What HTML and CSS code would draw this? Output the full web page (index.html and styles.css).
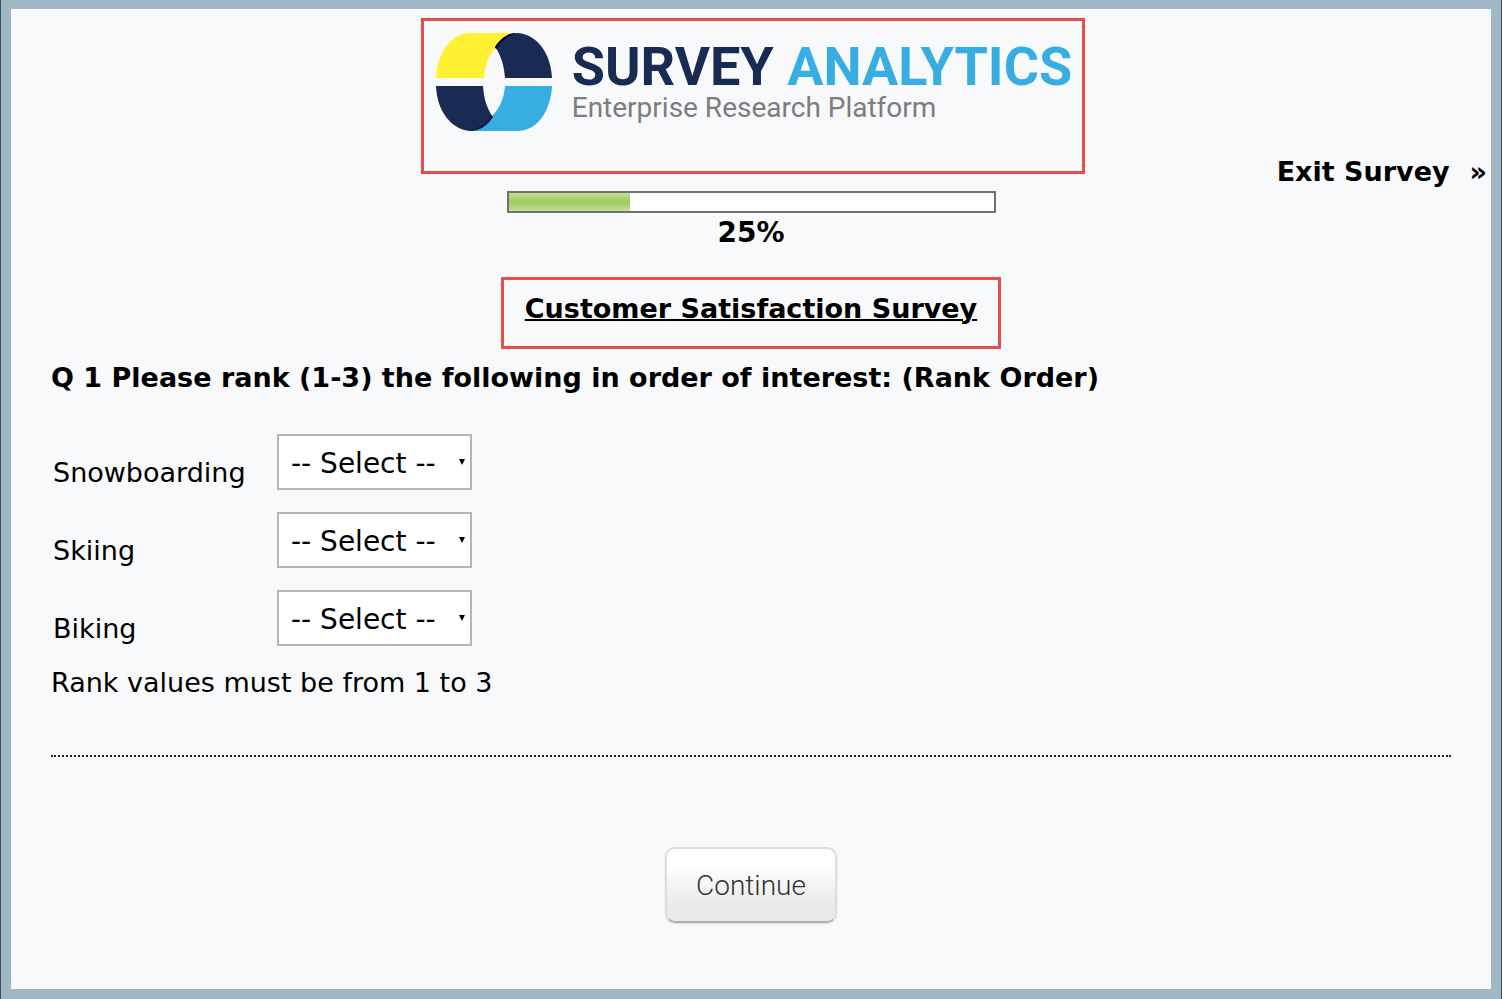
FILE: index.html
```html
<!DOCTYPE html>
<html lang="en">
<head>
<meta charset="utf-8">
<title>Customer Satisfaction Survey</title>
<link rel="stylesheet" href="styles.css">
</head>
<body>
<div class="page">
  <header class="header">
    <div class="logo-box">
      <svg class="logo-mark" viewBox="0 0 118 100" aria-hidden="true">
        <path fill="#fff033" d="M1 46 C2 22 15 2 34 1 L84 1 C75 2 67 7 61 16 C53 23 50 34 49 46 Z"/>
        <path fill="#192b52" d="M60 15 C66 6 73 1 83 1 C103 3 116 22 117 46 L70 46 C69 33 66 23 60 15 Z"/>
        <path fill="#00004e" d="M60 15 C66 6 73 1 81 1 C73 4 67 8 61 17 Z"/>
        <path fill="#38ade1" d="M117 54 C116 78 103 98 84 99 L36 99 C44 98 51 93 57 84 C65 76 69 66 70 54 Z"/>
        <path fill="#192b52" d="M1 54 L48 54 C49 67 52 77 58 85 C51 94 44 99 35 99 C15 97 2 78 1 54 Z"/>
        <path fill="#0c1748" d="M58 85 C52 94 44 99 35 99 C45 96 51 91 57 84 Z"/>
      </svg>
      <div class="logo-text">
        <span class="logo-name">SURVEY <span class="logo-accent">ANALYTICS</span></span>
        <span class="logo-tagline">Enterprise Research Platform</span>
      </div>
    </div>
    <a class="exit" href="#"><span>Exit Survey</span><span>»</span></a>
  </header>
  <main class="survey">
    <div class="progress" role="progressbar" aria-label="Survey progress" aria-valuenow="25" aria-valuemin="0" aria-valuemax="100">
      <div class="progress-fill" style="width: 25%"></div>
    </div>
    <div class="percent">25%</div>
    <h1 class="title">Customer Satisfaction Survey</h1>
    <form class="question">
      <h2 class="prompt">Q 1 Please rank (1-3) the following in order of interest: (Rank Order)</h2>
      <div class="ranks">
        <label class="rank-label" for="snowboarding">Snowboarding</label>
        <div class="rank-field"><select class="rank-select" id="snowboarding"><option>-- Select --</option><option>1</option><option>2</option><option>3</option></select><span class="arrow"></span></div>
        <label class="rank-label" for="skiing">Skiing</label>
        <div class="rank-field"><select class="rank-select" id="skiing"><option>-- Select --</option><option>1</option><option>2</option><option>3</option></select><span class="arrow"></span></div>
        <label class="rank-label" for="biking">Biking</label>
        <div class="rank-field"><select class="rank-select" id="biking"><option>-- Select --</option><option>1</option><option>2</option><option>3</option></select><span class="arrow"></span></div>
      </div>
      <p class="hint">Rank values must be from 1 to 3</p>
      <hr class="divider">
      <button class="continue" type="button">Continue</button>
    </form>
  </main>
</div>
</body>
</html>
```
FILE: styles.css
```css
* {
  box-sizing: border-box;
}

body {
  margin: 0;
  padding: 0 1px;
  background: #3d4c57;
  color: #000;
  font-family: Verdana, "DejaVu Sans", sans-serif;
  font-size: 27px;
  line-height: 34px;
}

.page {
  min-height: 100vh;
  background: #f7f9fb;
  border: 10px solid #a0b8c4;
  border-top-width: 9px;
  display: flex;
  flex-direction: column;
}

.header {
  display: grid;
  grid-template-columns: 1fr auto 1fr;
  padding: 9px 0 0 4px;
}

.logo-box {
  grid-column: 2;
  display: flex;
  align-items: flex-start;
  gap: 19px;
  height: 156px;
  padding: 11px 10px 0 11px;
  border: 3px solid #e94b48;
}

.logo-mark {
  width: 118px;
  height: 100px;
}

.logo-text {
  display: flex;
  flex-direction: column;
  padding-top: 10px;
  font-family: Roboto, sans-serif;
}

.logo-name {
  color: #192b52;
  font-size: 54px;
  font-weight: 700;
  line-height: 50px;
}

.logo-accent {
  color: #38ade1;
}

.logo-tagline {
  color: #7d7d7f;
  font-size: 28px;
  line-height: 32px;
}

.exit {
  align-self: end;
  justify-self: end;
  display: flex;
  gap: 20px;
  margin-bottom: -15px;
  padding-right: 4px;
  color: #000;
  font-weight: 700;
  text-decoration: none;
}

.survey {
  flex: 1;
  display: flex;
  flex-direction: column;
  align-items: center;
  padding: 17px 40px 40px;
}

.progress {
  width: 489px;
  max-width: 100%;
  height: 22px;
  background: #fff;
  border: 2px solid #717171;
}

.progress-fill {
  height: 100%;
  background: linear-gradient(#c4de98, #9ccb58 50%, #c4de98);
}

.percent {
  margin-top: 3px;
  font-size: 28px;
  font-weight: 700;
}

.title {
  margin: 27px 0 0;
  padding: 12px 21px 20px;
  border: 3px solid #e94b48;
  font-size: 27px;
  text-decoration: underline;
  text-decoration-thickness: 2px;
}

.question {
  align-self: stretch;
  display: flex;
  flex-direction: column;
}

.prompt {
  margin: 12px 0 0;
  font-size: 27px;
}

.ranks {
  display: grid;
  grid-template-columns: 224px 195px;
  row-gap: 22px;
  margin-top: 39px;
  padding-left: 2px;
}

.rank-label {
  align-self: end;
}

.rank-field {
  position: relative;
}

.rank-select {
  appearance: none;
  display: block;
  width: 100%;
  height: 56px;
  padding: 4px 12px 0;
  background: #fff;
  border: 2px solid #b5b5b5;
  border-radius: 0;
  color: #000;
  font: inherit;
  font-size: 28px;
}

.arrow {
  position: absolute;
  top: 25px;
  right: 7px;
  border: solid transparent;
  border-width: 6px 3px 0;
  border-top-color: #000;
  pointer-events: none;
}

.hint {
  margin: 20px 0 0;
}

.divider {
  width: 100%;
  margin: 55px 0 0;
  border: 0;
  border-top: 2px dotted #222;
}

.continue {
  align-self: center;
  width: 172px;
  height: 76px;
  margin-top: 90px;
  background: linear-gradient(#fff 25%, #f4f4f4 50%, #e8e9ea 80%);
  border: 2px solid #dcdddf;
  border-bottom-color: #b0b1b2;
  border-radius: 10px;
  box-shadow: 0 1px 2px #dddddd;
  color: #333;
  font-family: Roboto, sans-serif;
  font-size: 28px;
  font-weight: 300;
}
```
